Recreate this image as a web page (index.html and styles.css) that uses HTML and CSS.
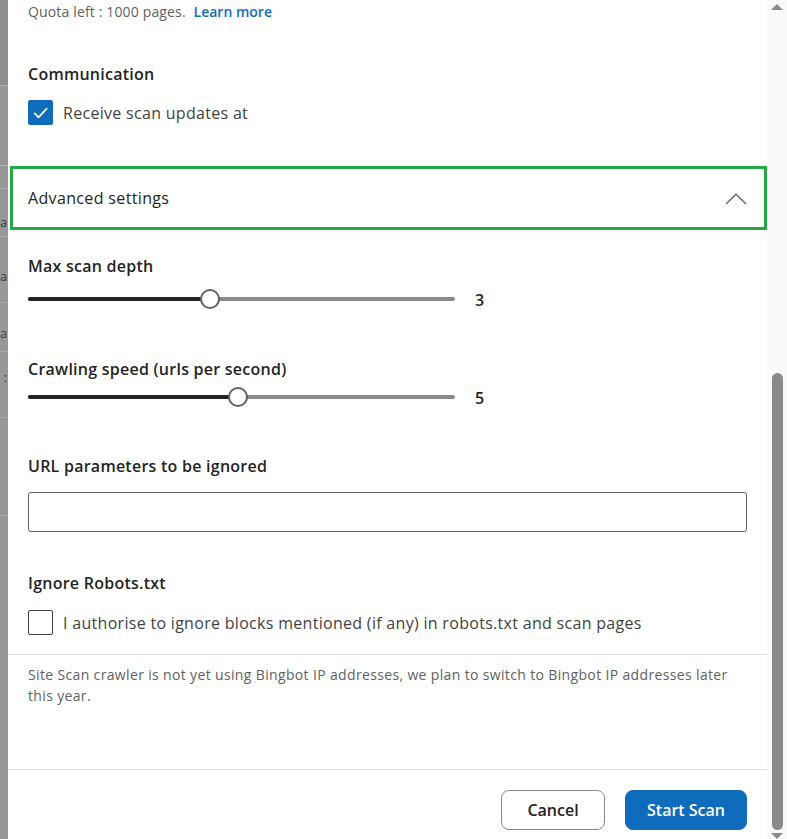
FILE: index.html
```html
<!DOCTYPE html>
<html lang="en">
<head>
<meta charset="utf-8">
<title>Site Scan</title>
<link rel="stylesheet" href="styles.css">
</head>
<body>
<div class="page">
  <div class="backdrop">
    <div class="bg-row r1"></div>
    <div class="bg-row r2"></div>
    <div class="bg-row r3"></div>
    <div class="bg-row r4"><span class="peek">a</span></div>
    <div class="bg-row r5"><span class="peek">a</span></div>
    <div class="bg-row r6"><span class="peek">a</span></div>
    <div class="bg-row r7"><span class="peek">:</span></div>
    <div class="bg-row r8"></div>
    <div class="bg-row r9"></div>
  </div>

  <div class="panel">
    <div class="content">
      <p class="quota">Quota left : 1000 pages. <a class="link" href="#">Learn more</a></p>

      <h3 class="title t-comm">Communication</h3>
      <label class="check-row cr-comm">
        <span class="box checked">
          <svg viewBox="0 0 24 24" width="24" height="24"><path d="M6 12.5l4 4 8.5-9" fill="none" stroke="#fff" stroke-width="1.8" stroke-linecap="round" stroke-linejoin="round"/></svg>
        </span>
        <span class="check-label">Receive scan updates at</span>
      </label>

      <div class="advanced">
        <span class="adv-text">Advanced settings</span>
        <svg class="chev" viewBox="0 0 22 12" width="22" height="12"><polyline points="1,11 11,1.2 21,11" fill="none" stroke="#616161" stroke-width="1.3"/></svg>
      </div>

      <h3 class="title t-depth">Max scan depth</h3>
      <div class="slider-row sr-depth">
        <div class="track">
          <div class="fill" style="width:42.6%"></div>
          <div class="thumb"></div>
        </div>
        <span class="value">3</span>
      </div>

      <h3 class="title t-speed">Crawling speed (urls per second)</h3>
      <div class="slider-row sr-speed">
        <div class="track">
          <div class="fill" style="width:49.2%"></div>
          <div class="thumb"></div>
        </div>
        <span class="value">5</span>
      </div>

      <h3 class="title t-url">URL parameters to be ignored</h3>
      <div class="input"></div>

      <h3 class="title t-robots">Ignore Robots.txt</h3>
      <label class="check-row cr-robots">
        <span class="box"></span>
        <span class="check-label">I authorise to ignore blocks mentioned (if any) in robots.txt and scan pages</span>
      </label>

      <div class="divider"></div>
      <p class="note">Site Scan crawler is not yet using Bingbot IP addresses, we plan to switch to Bingbot IP addresses later this year.</p>
    </div>

    <div class="footer">
      <button class="btn secondary">Cancel</button>
      <button class="btn primary">Start Scan</button>
    </div>
  </div>

  <div class="scrollbar">
    <span class="arrow up"></span>
    <div class="sb-track">
      <div class="sb-space"></div>
      <div class="sb-thumb"></div>
    </div>
    <span class="arrow down"></span>
  </div>
</div>
</body>
</html>
```

FILE: styles.css
```css
* { box-sizing: border-box; }

html, body {
  margin: 0;
  padding: 0;
  height: 100%;
  overflow: hidden;
  background: #fff;
}

body {
  font-family: "Open Sans", "Noto Sans", sans-serif;
  color: #242424;
}

.page {
  display: flex;
  height: 839px;
  width: 787px;
}

/* background page peeking at the left */
.backdrop {
  width: 8px;
  flex: none;
  background: #979797;
  display: flex;
  flex-direction: column;
  overflow: hidden;
}
.bg-row {
  border-bottom: 1px solid #a8a8a8;
  flex: none;
  font-size: 12px;
  color: #3a3a3a;
  display: flex;
  justify-content: flex-end;
  align-items: center;
  padding-right: 1px;
}
.bg-row.r1 { height: 86px; background: #8f8f8f; border-bottom-color: #b0b0b0; }
.bg-row.r2 { height: 80px; border-bottom-color: #b4b4b4; }
.bg-row.r3 { height: 23px; }
.bg-row.r4 { height: 48px; padding-top: 20px; }
.bg-row.r5 { height: 66px; padding-top: 15px; }
.bg-row.r6 { height: 49px; padding-top: 14px; }
.bg-row.r7 { height: 66px; padding-bottom: 14px; }
.bg-row.r8 { height: 98px; }
.bg-row.r9 { flex: 1; border-bottom: 0; }
.peek { white-space: nowrap; line-height: 12px; }

/* panel */
.panel {
  flex: 1;
  background: #fff;
  display: flex;
  flex-direction: column;
  min-width: 0;
}
.content {
  flex: 1;
  padding: 2px 20px 0 20px;
}

.quota {
  margin: 0;
  font-size: 14px;
  line-height: 20px;
  color: #616161;
  letter-spacing: 0.15px;
}
.link {
  color: #0f6cbd;
  text-decoration: none;
  font-weight: 600;
  letter-spacing: 0;
  margin-left: 4px;
}

.title {
  margin: 0;
  font-size: 16px;
  line-height: 22px;
  font-weight: 600;
  color: #242424;
  letter-spacing: 0.25px;
}
.t-comm { margin-top: 41px; }
.t-depth { margin-top: 25px; }
.t-speed { margin-top: 49px; }
.t-url { margin-top: 48px; }
.t-robots { margin-top: 40px; }

.check-row {
  display: flex;
  align-items: center;
  gap: 10px;
}
.cr-comm { margin-top: 15px; height: 25px; }
.cr-robots { margin-top: 16px; height: 25px; }

.box {
  width: 25px;
  height: 25px;
  flex: none;
  border: 1px solid #424242;
  border-radius: 2px;
  display: flex;
  align-items: center;
  justify-content: center;
  background: #fff;
}
.box.checked {
  background: #0f6cbd;
  border-color: #0f6cbd;
}
.check-label {
  font-size: 16px;
  line-height: 22px;
  color: #424242;
  letter-spacing: 0.3px;
}

.advanced {
  margin: 41px -20px 0 -18px;
  height: 64px;
  border: 3px solid #24a844;
  padding: 0 17px 0 15px;
  display: flex;
  align-items: center;
  justify-content: space-between;
}
.adv-text {
  font-size: 16px;
  color: #242424;
  letter-spacing: 0.35px;
}
.chev { display: block; margin-top: 2px; }

.slider-row {
  display: flex;
  align-items: center;
  height: 20px;
}
.sr-depth { margin-top: 12px; }
.sr-speed { margin-top: 7px; }
.track {
  position: relative;
  width: 427px;
  height: 4px;
  border-radius: 2px;
  background: #8a8a8a;
}
.fill {
  height: 4px;
  border-radius: 2px;
  background: #242424;
}
.thumb {
  position: absolute;
  top: 50%;
  width: 20px;
  height: 20px;
  margin: -10px 0 0 -10px;
  border-radius: 50%;
  background: #fff;
  border: 2px solid #616161;
}
.sr-depth .thumb { left: 42.6%; }
.sr-speed .thumb { left: 49.2%; }
.value {
  margin-left: 20px;
  font-size: 16px;
  font-weight: 600;
  color: #242424;
  line-height: 22px;
  padding-top: 2px;
}

.input {
  margin-top: 15px;
  height: 40px;
  border: 1px solid #616161;
  border-radius: 3px;
  background: #fff;
}

.divider {
  margin: 19px -20px 0 -20px;
  height: 1px;
  background: #e0e0e0;
}
.note {
  margin: 9px 0 0 0;
  font-size: 14px;
  line-height: 21px;
  color: #616161;
  letter-spacing: 0.35px;
  max-width: 705px;
}

.footer {
  border-top: 1px solid #e0e0e0;
  padding: 20px 20px 9px 20px;
  display: flex;
  justify-content: flex-end;
  gap: 20px;
}
.btn {
  height: 40px;
  border-radius: 8px;
  font-family: inherit;
  font-size: 16px;
  font-weight: 600;
  padding: 0;
  cursor: pointer;
}
.btn.secondary {
  width: 104px;
  background: #fff;
  border: 1px solid #8a8a8a;
  color: #242424;
}
.btn.primary {
  width: 122px;
  background: #0f6cbd;
  border: 1px solid #0f6cbd;
  color: #fff;
}

/* scrollbar */
.scrollbar {
  width: 20px;
  flex: none;
  background: #fafafa;
  display: flex;
  flex-direction: column;
  align-items: center;
}
.arrow {
  width: 0;
  height: 0;
  border-left: 6px solid transparent;
  border-right: 6px solid transparent;
  flex: none;
}
.arrow.up {
  margin-top: 4px;
  border-bottom: 6px solid #8a8a8a;
}
.arrow.down {
  border-top: 6px solid #8a8a8a;
}
.sb-track {
  flex: 1;
  width: 100%;
  display: flex;
  flex-direction: column;
  align-items: center;
}
.sb-space { height: 363px; flex: none; }
.sb-thumb {
  width: 11px;
  flex: 1;
  margin-bottom: 3px;
  border-radius: 6px;
  background: #8a8a8a;
}
```
